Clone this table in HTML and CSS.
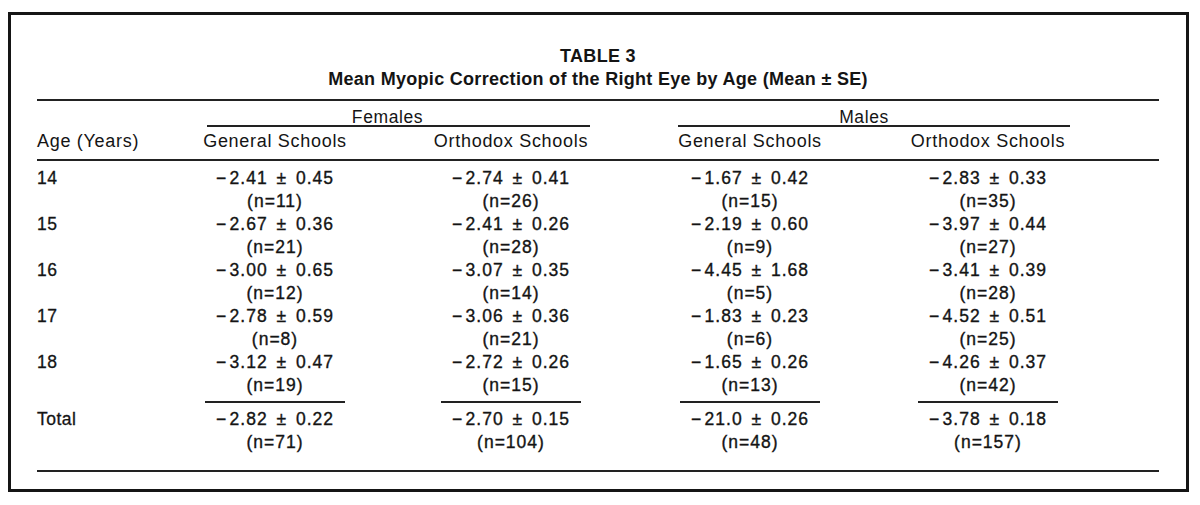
FILE: index.html
```html
<!DOCTYPE html>
<html>
<head>
<meta charset="utf-8">
<link rel="stylesheet" href="styles.css">
</head>
<body>
<div class="frame">
  <div class="caption">
    <div class="t1">TABLE 3</div>
    <div class="t2">Mean Myopic Correction of the Right Eye by Age (Mean ± SE)</div>
  </div>
  <div class="rule"></div>
  <div class="cols groups">
    <div></div>
    <div class="group fem">Females</div>
    <div class="group male">Males</div>
  </div>
  <div class="cols heads">
    <div class="age">Age (Years)</div>
    <div class="ch">General Schools</div>
    <div class="ch">Orthodox Schools</div>
    <div class="ch">General Schools</div>
    <div class="ch">Orthodox Schools</div>
  </div>
  <div class="rule mid"></div>
  <div class="cols body">
    <div class="age">14</div>
    <div class="val">−&#8202;2.41 ± 0.45<br>(n=11)</div>
    <div class="val">−&#8202;2.74 ± 0.41<br>(n=26)</div>
    <div class="val">−&#8202;1.67 ± 0.42<br>(n=15)</div>
    <div class="val">−&#8202;2.83 ± 0.33<br>(n=35)</div>

    <div class="age">15</div>
    <div class="val">−&#8202;2.67 ± 0.36<br>(n=21)</div>
    <div class="val">−&#8202;2.41 ± 0.26<br>(n=28)</div>
    <div class="val">−&#8202;2.19 ± 0.60<br>(n=9)</div>
    <div class="val">−&#8202;3.97 ± 0.44<br>(n=27)</div>

    <div class="age">16</div>
    <div class="val">−&#8202;3.00 ± 0.65<br>(n=12)</div>
    <div class="val">−&#8202;3.07 ± 0.35<br>(n=14)</div>
    <div class="val">−&#8202;4.45 ± 1.68<br>(n=5)</div>
    <div class="val">−&#8202;3.41 ± 0.39<br>(n=28)</div>

    <div class="age">17</div>
    <div class="val">−&#8202;2.78 ± 0.59<br>(n=8)</div>
    <div class="val">−&#8202;3.06 ± 0.36<br>(n=21)</div>
    <div class="val">−&#8202;1.83 ± 0.23<br>(n=6)</div>
    <div class="val">−&#8202;4.52 ± 0.51<br>(n=25)</div>

    <div class="age">18</div>
    <div class="val">−&#8202;3.12 ± 0.47<br>(n=19)</div>
    <div class="val">−&#8202;2.72 ± 0.26<br>(n=15)</div>
    <div class="val">−&#8202;1.65 ± 0.26<br>(n=13)</div>
    <div class="val">−&#8202;4.26 ± 0.37<br>(n=42)</div>

    <div class="age total-label">Total</div>
    <div class="val"><div class="tot">−&#8202;2.82 ± 0.22<br>(n=71)</div></div>
    <div class="val"><div class="tot">−&#8202;2.70 ± 0.15<br>(n=104)</div></div>
    <div class="val"><div class="tot">−&#8202;21.0 ± 0.26<br>(n=48)</div></div>
    <div class="val"><div class="tot">−&#8202;3.78 ± 0.18<br>(n=157)</div></div>
  </div>
  <div class="rule bottom"></div>
</div>
</body>
</html>
```

FILE: styles.css
```css
html, body {
  margin: 0;
  padding: 0;
  background: #fff;
}

body {
  font-family: "Liberation Sans", Arial, sans-serif;
  color: #141414;
}

.frame {
  box-sizing: border-box;
  margin: 12px 0 0 8px;
  width: 1181px;
  height: 480px;
  border: 3px solid #151515;
  padding: 0 27px 0 26px;
}

.caption {
  padding-top: 30px;
  text-align: center;
  font-weight: bold;
  font-size: 18px;
  line-height: 23px;
  letter-spacing: 0.3px;
}

.rule {
  height: 2px;
  background: #222;
  margin-top: 8px;
}

.rule.mid {
  margin-top: 7px;
}

.rule.bottom {
  margin-top: 16px;
}

.cols {
  display: grid;
  grid-template-columns: 119px 238px 234px 244px 232px 1fr;
}

.groups {
  margin-top: 9px;
  font-size: 17.5px;
  line-height: 15px;
  letter-spacing: 0.6px;
}

.group {
  grid-column: span 2;
  text-align: center;
  border-bottom: 2px solid #222;
}

.group.fem {
  margin: 0 38px 0 51px;
  padding-right: 22px;
}

.group.male {
  margin: 0 34px 0 50px;
  padding-right: 20px;
}

.heads {
  margin-top: 3px;
  font-size: 18px;
  line-height: 22px;
  letter-spacing: 0.7px;
}

.ch {
  text-align: center;
}

.body {
  padding-top: 6px;
  font-size: 17.5px;
  line-height: 23px;
  letter-spacing: 1px;
  word-spacing: 3px;
}

.body .age {
  grid-column: 1;
  letter-spacing: 0.5px;
  -webkit-text-stroke: 0.3px #141414;
}

.val {
  text-align: center;
  -webkit-text-stroke: 0.35px #141414;
}

.body .val:nth-child(5n) {
  grid-column: 5;
}

.tot {
  width: 140px;
  margin: 4px auto 0;
  padding-top: 5px;
  border-top: 2px solid #222;
}

.total-label {
  padding-top: 11px;
}
```
